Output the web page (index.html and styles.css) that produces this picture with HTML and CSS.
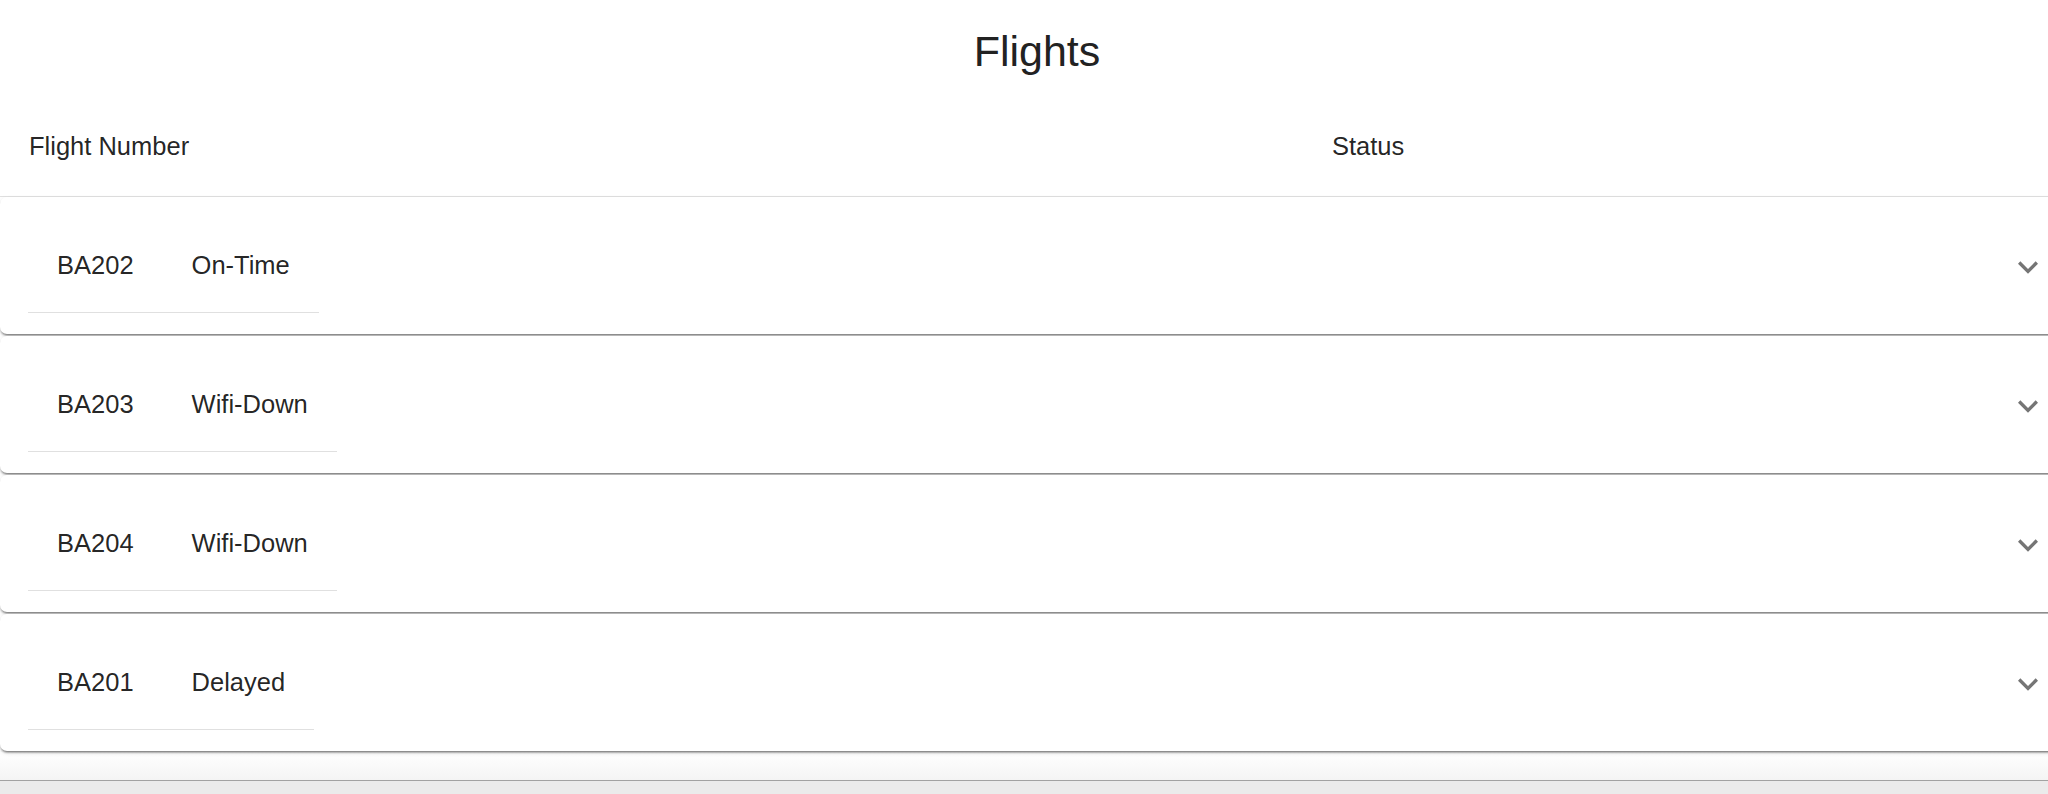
FILE: index.html
```html
<!DOCTYPE html>
<html lang="en">
<head>
<meta charset="utf-8">
<title>Flights</title>
<link rel="stylesheet" href="styles.css">
</head>
<body>
<div class="page">
  <h1 class="title">Flights</h1>
  <div class="thead">
    <div class="th">Flight Number</div>
    <div class="th">Status</div>
  </div>
  <div class="list">
    <div class="acc">
      <div class="summary">
        <table class="inner"><tr><td>BA202</td><td>On-Time</td></tr></table>
        <svg class="chev" viewBox="0 0 24 24"><path d="M16.59 8.59 12 13.17 7.41 8.59 6 10l6 6 6-6z"/></svg>
      </div>
    </div>
    <div class="acc">
      <div class="summary">
        <table class="inner"><tr><td>BA203</td><td>Wifi-Down</td></tr></table>
        <svg class="chev" viewBox="0 0 24 24"><path d="M16.59 8.59 12 13.17 7.41 8.59 6 10l6 6 6-6z"/></svg>
      </div>
    </div>
    <div class="acc">
      <div class="summary">
        <table class="inner"><tr><td>BA204</td><td>Wifi-Down</td></tr></table>
        <svg class="chev" viewBox="0 0 24 24"><path d="M16.59 8.59 12 13.17 7.41 8.59 6 10l6 6 6-6z"/></svg>
      </div>
    </div>
    <div class="acc">
      <div class="summary">
        <table class="inner"><tr><td>BA201</td><td>Delayed</td></tr></table>
        <svg class="chev" viewBox="0 0 24 24"><path d="M16.59 8.59 12 13.17 7.41 8.59 6 10l6 6 6-6z"/></svg>
      </div>
    </div>
  </div>
  <div class="tail"></div>
</div>
</body>
</html>
```
FILE: styles.css
```css
html {
  background: #ebebeb;
}
body {
  margin: 0;
  overflow: hidden;
  font-family: "Liberation Sans", Helvetica, Arial, sans-serif;
  color: rgba(0, 0, 0, 0.87);
}
.page {
  width: 2074px;
  background: #fff;
}
.title {
  margin: 0;
  padding: 28px 0 22px;
  text-align: center;
  font-size: 43px;
  line-height: 46px;
  font-weight: 400;
  color: #222;
}
.thead {
  display: grid;
  grid-template-columns: 1303px 1fr;
  border-bottom: 1px solid #e0e0e0;
}
.th {
  padding: 29px;
  font-size: 25.5px;
  line-height: 42px;
}
.list {
  display: flex;
  flex-direction: column;
  gap: 2px;
}
.acc {
  height: 137px;
  background: #fff;
  border-radius: 7px;
  box-shadow: 0 3px 2px -2px rgba(0, 0, 0, 0.35), 0 2px 2px 0 rgba(0, 0, 0, 0.2), 0 2px 5px 0 rgba(0, 0, 0, 0.1);
}
.summary {
  height: 100%;
  display: flex;
  align-items: center;
  justify-content: space-between;
  padding: 0 26px 0 28px;
  box-sizing: border-box;
}
.inner {
  border-collapse: collapse;
}
.inner td {
  padding: 29px;
  font-size: 25.5px;
  line-height: 36px;
  border-bottom: 1px solid #e0e0e0;
  white-space: nowrap;
}
.chev {
  width: 40px;
  height: 40px;
  fill: #757575;
  margin-top: 2px;
}
.tail {
  margin-top: 1px;
  height: 28px;
  background: linear-gradient(#ffffff, #f4f4f4);
  border-bottom: 1px solid #a2a2a2;
  box-shadow: 0 1px 2px rgba(0, 0, 0, 0.2);
}
```
